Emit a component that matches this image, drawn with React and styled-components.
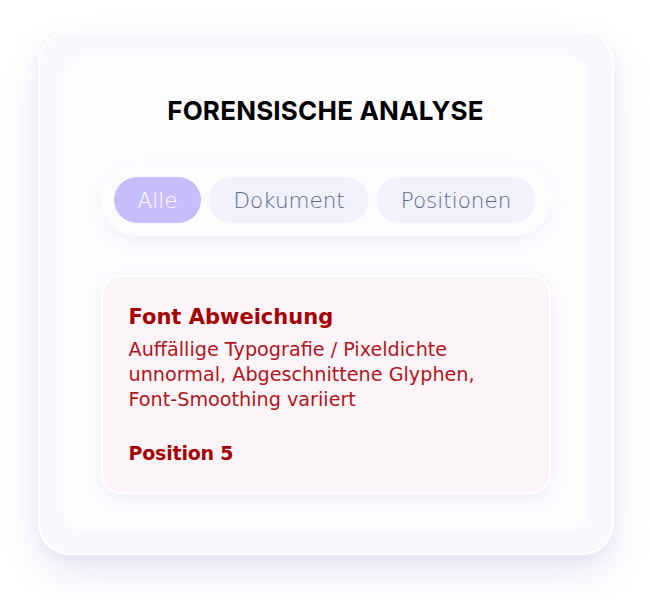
import React, { useState } from "react";
import styled, { createGlobalStyle } from "styled-components";

const GlobalStyle = createGlobalStyle`
  html, body {
    margin: 0;
    padding: 0;
    background: #ffffff;
  }
  body {
    font-family: "DejaVu Sans", "Noto Sans", sans-serif;
    -webkit-font-smoothing: antialiased;
  }
`;

const tabs = ["Alle", "Dokument", "Positionen"];

const findings = [
  {
    title: "Font Abweichung",
    text: "Auffällige Typografie / Pixeldichte unnormal, Abgeschnittene Glyphen, Font-Smoothing variiert",
    position: "Position 5",
  },
];

export default function App() {
  const [active, setActive] = useState("Alle");

  return (
    <>
      <GlobalStyle />
      <Page>
        <OuterCard>
          <Panel>
            <Heading>FORENSISCHE ANALYSE</Heading>
            <TabBar>
              {tabs.map((t) => (
                <Tab key={t} $active={t === active} onClick={() => setActive(t)}>
                  {t}
                </Tab>
              ))}
            </TabBar>
            {findings.map((f, idx) => (
              <Finding key={idx}>
                <FindingTitle>{f.title}</FindingTitle>
                <FindingText>{f.text}</FindingText>
                <FindingPosition>{f.position}</FindingPosition>
              </Finding>
            ))}
          </Panel>
        </OuterCard>
      </Page>
    </>
  );
}

const Page = styled.div`
  display: flex;
  justify-content: center;
  align-items: flex-start;
  padding-top: 31px;
  min-height: 601px;
  box-sizing: border-box;
`;

const OuterCard = styled.div`
  width: 576px;
  box-sizing: border-box;
  padding: 22px 23px;
  background: #f8f8fe;
  border: 2px solid #ffffff;
  border-radius: 32px;
  box-shadow: 0 18px 40px rgba(150, 140, 220, 0.22), 0 4px 12px rgba(150, 140, 220, 0.08);
`;

const Panel = styled.div`
  background: #fcfcff;
  border-radius: 22px;
  padding: 41px 38px 37px;
  display: flex;
  flex-direction: column;
  align-items: center;
`;

const Heading = styled.h1`
  margin: 0;
  font-family: Inter, "Liberation Sans", sans-serif;
  font-weight: 700;
  font-size: 26px;
  line-height: 30px;
  letter-spacing: 0.2px;
  color: #000000;
`;

const TabBar = styled.div`
  margin-top: 38px;
  align-self: stretch;
  display: flex;
  gap: 8px;
  padding: 12px;
  background: #fcfcff;
  border: 1px solid #ffffff;
  border-radius: 40px;
  box-shadow: 0 6px 16px rgba(160, 150, 220, 0.1);
`;

const Tab = styled.button`
  height: 46px;
  padding: 0 24px;
  border: none;
  border-radius: 23px;
  background: ${(p) => (p.$active ? "#c6befc" : "#f2f2fe")};
  color: ${(p) => (p.$active ? "#ffffff" : "#5c6684")};
  font-family: "DejaVu Sans", sans-serif;
  font-weight: 200;
  font-size: 21.5px;
  cursor: pointer;
`;

const Finding = styled.div`
  margin-top: 39px;
  align-self: stretch;
  box-sizing: border-box;
  padding: 26px 26px 24px;
  background: #fbf4f8;
  border: 2px solid #ffffff;
  border-radius: 20px;
  box-shadow: 0 6px 16px rgba(160, 150, 220, 0.12);
`;

const FindingTitle = styled.div`
  font-weight: 700;
  font-size: 21px;
  line-height: 28px;
  color: #a50000;
`;

const FindingText = styled.div`
  margin-top: 6px;
  font-weight: 400;
  font-size: 19.2px;
  line-height: 25px;
  color: #b2161c;
`;

const FindingPosition = styled.div`
  margin-top: 27px;
  font-weight: 700;
  font-size: 19px;
  line-height: 29px;
  letter-spacing: -0.2px;
  color: #a50000;
`;
